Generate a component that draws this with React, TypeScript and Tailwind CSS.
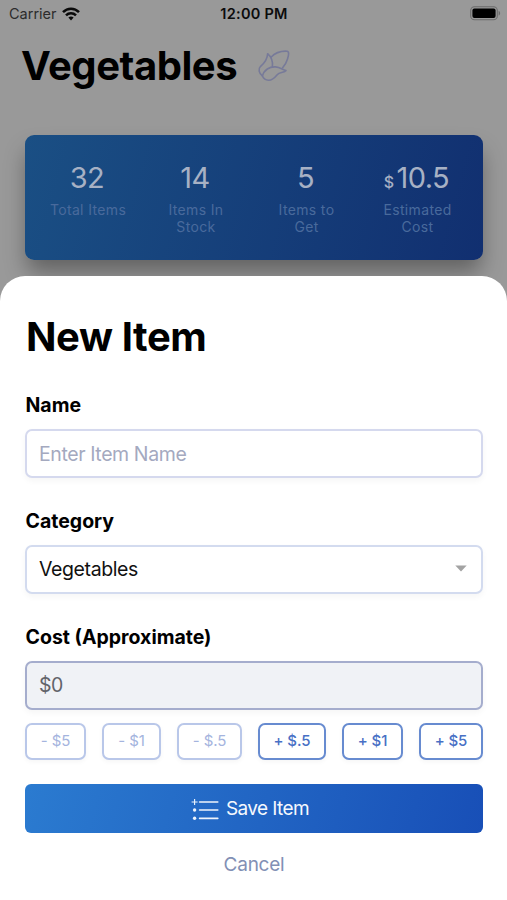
import { clsx } from "clsx";

const stats = [
  { value: "32", lines: ["Total Items"], width: "w-[108px]" },
  { value: "14", lines: ["Items In", "Stock"], width: "w-[108px]" },
  { value: "5", lines: ["Items to", "Get"], width: "w-[113px]" },
  { value: "10.5", prefix: "$", lines: ["Estimated", "Cost"], width: "w-[109px]" },
];

const steps = [
  { label: "- $5", width: "w-[61px]", muted: true },
  { label: "- $1", width: "w-[59px]", muted: true },
  { label: "- $.5", width: "w-[65px]", muted: true },
  { label: "+ $.5", width: "w-[68px]", muted: false },
  { label: "+ $1", width: "w-[61px]", muted: false },
  { label: "+ $5", width: "w-[64px]", muted: false },
];

function WifiIcon() {
  return (
    <svg width="18" height="14" viewBox="0 0 18 14" fill="none" stroke="#0a0a0a" strokeWidth="2.5">
      <path d="M1 5.2C5.5 0.6 12.5 0.6 17 5.2" />
      <path d="M4 8.3C6.8 5.5 11.2 5.5 14 8.3" />
      <path d="M6.4 10.5Q9 8.3 11.6 10.5L9 13.4Z" fill="#0a0a0a" stroke="none" />
    </svg>
  );
}

function BatteryIcon() {
  return (
    <svg width="31" height="15" viewBox="0 0 31 15" className="-mt-[2px]">
      <rect x="0.7" y="0.7" width="26.6" height="13.1" rx="3.8" fill="none" stroke="#6b6b6b" strokeWidth="1.1" />
      <rect x="2.4" y="2.4" width="23.2" height="9.7" rx="2" fill="#000" />
      <path d="M28.6 4.8C30.6 5.6 30.6 8.8 28.6 9.6Z" fill="#6b6b6b" />
    </svg>
  );
}

function VegetableIcon() {
  return (
    <svg
      width="34"
      height="34"
      viewBox="0 0 34 34"
      fill="none"
      stroke="#777a99"
      strokeWidth="1.6"
      strokeLinecap="round"
      strokeLinejoin="round"
    >
      <path d="M5.4 27C1.8 24 1 20 3.6 17.3C8 13.5 10.4 10.5 10.6 4.7C14.5 8 16 13 15.4 18.2" />
      <path d="M14 8.2C18 4 24 1.9 30 2.2C32.8 2.5 31.3 7 30.5 10C29.5 13.7 27.8 16.3 25.6 18.7" />
      <path d="M5.4 27C7 20.8 12.5 17.5 18.5 17.9C23 18.2 25 20.3 29 21.6C26 24.4 22.8 22.7 20.2 25.8C17.4 29.2 15.2 31.4 11.6 31.3C8.6 31.1 6.5 29.5 5.4 27Z" />
    </svg>
  );
}

function ListAddIcon() {
  return (
    <svg width="28" height="24" viewBox="0 0 28 24" fill="#eef4fc" stroke="#eef4fc">
      <path d="M3.6 1V7M0.6 4H6.6" strokeWidth="1.1" />
      <path d="M8.6 4H26.8M8.6 12H26.8M8.6 20.4H26.8" strokeWidth="1.6" strokeLinecap="round" />
      <circle cx="3.6" cy="12" r="1.7" stroke="none" />
      <circle cx="3.6" cy="20.2" r="1.7" stroke="none" />
    </svg>
  );
}

function Label({ children }: { children: string }) {
  return <p className="mb-3 pl-[0.5px] text-[19.5px] leading-6 font-bold text-black">{children}</p>;
}

export default function App() {
  return (
    <div className="flex h-[900px] w-[507px] flex-col overflow-hidden bg-[#999] font-['Inter',sans-serif]">
      <div className="h-[276px]">
        <div className="grid h-[28px] grid-cols-3 items-center pr-[6px] pl-[9px] text-[14.5px] text-[#0c0c0c]">
          <div className="flex items-center gap-[5px]">
            <span className="text-[#2c2c2c]">Carrier</span>
            <WifiIcon />
          </div>
          <span className="pr-[2px] text-center font-semibold tracking-[0.25px] whitespace-nowrap">12:00 PM</span>
          <div className="flex justify-end">
            <BatteryIcon />
          </div>
        </div>

        <div className="mt-[14px] flex h-12 items-center gap-[20px] pl-[21px]">
          <h1 className="text-[40px] leading-[48px] font-bold tracking-[-0.45px] text-black">Vegetables</h1>
          <VegetableIcon />
        </div>

        <div className="mr-[24px] ml-[25px] mt-[45px] flex h-[125px] rounded-[9px] bg-linear-[105deg] from-[#1a4f84] to-[#112f70] pt-[24px] pl-[9px] shadow-[0_14px_22px_-2px_rgba(0,0,0,0.36)]">
          {stats.map((stat) => (
            <div key={stat.value} className={clsx("flex shrink-0 flex-col items-center", stat.width)}>
              <p className="h-[38px] pr-[2px] text-[29px] leading-[38px] tracking-[-0.6px] text-[#a7b1c4]">
                {stat.prefix && <span className="mr-[3px] text-[16px] leading-none font-medium">{stat.prefix}</span>}
                {stat.value}
              </p>
              <p className="mt-[4px] text-center text-[14px] leading-[17px] tracking-[0.35px] text-[#496a9c]">
                {stat.lines.map((line) => (
                  <span key={line} className="block whitespace-nowrap">
                    {line}
                  </span>
                ))}
              </p>
            </div>
          ))}
        </div>
      </div>

      <div className="flex-1 rounded-t-[25px] bg-white pt-[37px] pr-[24px] pl-[25px]">
        <h2 className="pl-px text-[40px] leading-[48px] font-bold tracking-[-0.4px] text-black">New Item</h2>

        <div className="mt-8">
          <Label>Name</Label>
          <input
            placeholder="Enter Item Name"
            className="block h-[49px] w-full rounded-[7px] border-2 border-[#d5d9ee] bg-white px-[12px] text-[19.5px] tracking-[-0.4px] shadow-[0_3px_6px_rgba(0,0,0,0.04)] placeholder:text-[#a4a9bf]"
          />
        </div>

        <div className="mt-[31px]">
          <Label>Category</Label>
          <div className="flex h-[49px] items-center justify-between rounded-[7px] border-2 border-[#d3dbef] bg-white pr-[14px] pl-[12px] text-[19.5px] tracking-[-0.4px] text-[#111] shadow-[0_3px_6px_rgba(0,0,0,0.04)]">
            Vegetables
            <svg width="12" height="7" viewBox="0 0 12 7" className="mb-[2px]">
              <path d="M0.3 0.5H11.7L6 6.5Z" fill="#a3a3a3" />
            </svg>
          </div>
        </div>

        <div className="mt-[31px]">
          <Label>Cost (Approximate)</Label>
          <div className="flex h-[49px] items-center rounded-[7px] border-2 border-[#a5adcd] bg-[#f0f2f6] pl-[12px] text-[19.5px] tracking-[-0.4px] text-[#62646a] shadow-[0_3px_6px_rgba(0,0,0,0.04)]">
            $0
          </div>
        </div>

        <div className="mt-[13px] flex justify-between">
          {steps.map((step) => (
            <button
              key={step.label}
              className={clsx(
                "h-[37px] rounded-[7px] border-2 bg-white text-[15px] tracking-[-0.1px] shadow-[0_2px_5px_rgba(0,0,0,0.04)]",
                step.width,
                step.muted ? "border-[#b9c7e9] text-[#a4b4de]" : "border-[#678bd0] font-medium text-[#4870c5]",
              )}
            >
              {step.label}
            </button>
          ))}
        </div>

        <button className="mt-[24px] flex h-[49px] w-full items-center justify-center gap-[7px] rounded-[6px] bg-linear-[105deg] from-[#2b7bd0] to-[#184fb7] pt-[2px] pr-[8px] text-[19px] tracking-[-0.6px] text-[#f5f8fd]">
          <ListAddIcon />
          Save Item
        </button>
        <button className="mt-[20px] block h-6 w-full text-center text-[19px] leading-6 tracking-[-0.25px] text-[#8290b5]">
          Cancel
        </button>
      </div>
    </div>
  );
}
